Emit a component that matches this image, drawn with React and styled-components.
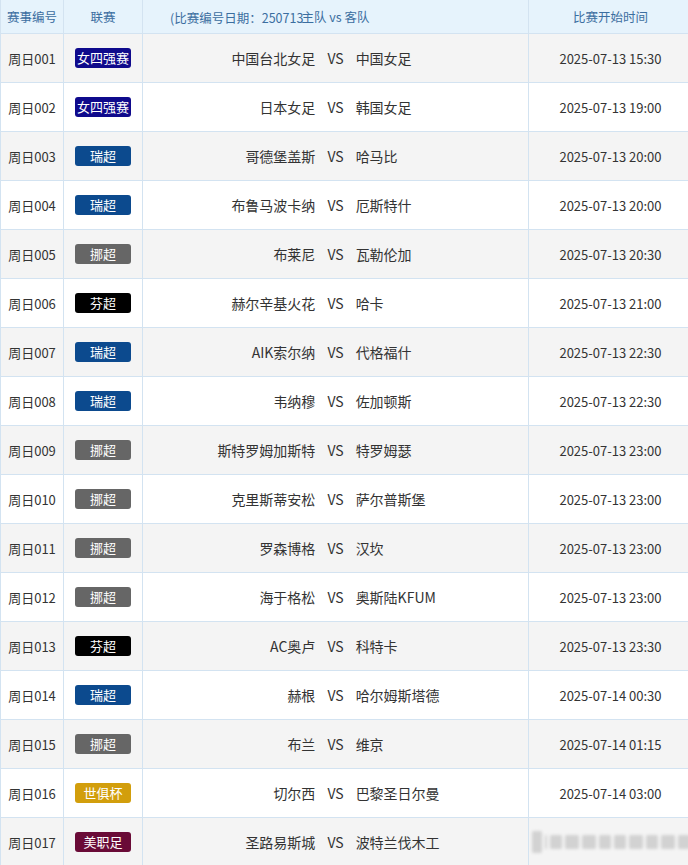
import React from "react";
import styled, { createGlobalStyle } from "styled-components";

const GlobalStyle = createGlobalStyle`
  body {
    margin: 0;
    background: #fff;
    font-family: "Noto Sans CJK SC", "Noto Sans", sans-serif;
    color: #333;
  }
`;

const Table = styled.table`
  width: 688px;
  border-collapse: collapse;
  table-layout: fixed;
  font-size: 13px;
`;

const HeadCell = styled.th`
  position: relative;
  height: 33px;
  padding: 0;
  background: #e6f3fc;
  color: #3b6ea0;
  font-weight: 400;
  font-size: 12.5px;
  border: 1px solid #d3e3f1;
  border-top: none;
  text-align: center;
  width: ${(p) => p.w}px;
`;

const Note = styled.span`
  position: absolute;
  left: 27px;
  top: 50%;
  transform: translateY(-50%);
  white-space: nowrap;
`;

const Row = styled.tr`
  background: ${(p) => (p.odd ? "#f4f4f4" : "#fff")};
`;

const Cell = styled.td`
  height: 48px;
  padding: 0;
  border: 1px solid #d3e3f1;
  text-align: center;
  vertical-align: middle;
  overflow: hidden;
`;

const Badge = styled.span`
  display: inline-block;
  width: 56px;
  height: 20px;
  line-height: 20px;
  border-radius: 3px;
  color: #fff;
  font-size: 13px;
  background: ${(p) => p.bg};
`;

const Match = styled.div`
  display: grid;
  grid-template-columns: 1fr auto 1fr;
  column-gap: 12px;
  align-items: center;
  font-size: 14px;
`;

const Home = styled.span`
  text-align: right;
`;

const Away = styled.span`
  text-align: left;
`;

const Vs = styled.span`
  font-size: 14px;
`;

const Mark = styled.div`
  display: flex;
  align-items: center;
  justify-content: center;
  gap: 3px;
  filter: blur(1.5px);
`;

const MarkBlock = styled.span`
  width: ${(p) => p.w}px;
  height: ${(p) => p.h}px;
  background: #d2d2d2;
  border-radius: 2px;
`;

const leagues = {
  女四强赛: "#0f0a8c",
  瑞超: "#0c4a8e",
  挪超: "#666666",
  芬超: "#000000",
  世俱杯: "#d29e0c",
  美职足: "#6a0b37",
};

const matches = [
  ["001", "女四强赛", "中国台北女足", "中国女足", "2025-07-13 15:30"],
  ["002", "女四强赛", "日本女足", "韩国女足", "2025-07-13 19:00"],
  ["003", "瑞超", "哥德堡盖斯", "哈马比", "2025-07-13 20:00"],
  ["004", "瑞超", "布鲁马波卡纳", "厄斯特什", "2025-07-13 20:00"],
  ["005", "挪超", "布莱尼", "瓦勒伦加", "2025-07-13 20:30"],
  ["006", "芬超", "赫尔辛基火花", "哈卡", "2025-07-13 21:00"],
  ["007", "瑞超", "AIK索尔纳", "代格福什", "2025-07-13 22:30"],
  ["008", "瑞超", "韦纳穆", "佐加顿斯", "2025-07-13 22:30"],
  ["009", "挪超", "斯特罗姆加斯特", "特罗姆瑟", "2025-07-13 23:00"],
  ["010", "挪超", "克里斯蒂安松", "萨尔普斯堡", "2025-07-13 23:00"],
  ["011", "挪超", "罗森博格", "汉坎", "2025-07-13 23:00"],
  ["012", "挪超", "海于格松", "奥斯陆KFUM", "2025-07-13 23:00"],
  ["013", "芬超", "AC奥卢", "科特卡", "2025-07-13 23:30"],
  ["014", "瑞超", "赫根", "哈尔姆斯塔德", "2025-07-14 00:30"],
  ["015", "挪超", "布兰", "维京", "2025-07-14 01:15"],
  ["016", "世俱杯", "切尔西", "巴黎圣日尔曼", "2025-07-14 03:00"],
  ["017", "美职足", "圣路易斯城", "波特兰伐木工", null],
];

const markBlocks = [
  [10, 22], [2, 14], [12, 14], [14, 14], [14, 14], [12, 14],
  [12, 14], [14, 14], [12, 14], [14, 14], [12, 14],
];

export default function App() {
  return (
    <>
      <GlobalStyle />
      <Table>
        <thead>
          <tr>
            <HeadCell w={62}>赛事编号</HeadCell>
            <HeadCell w={78}>联赛</HeadCell>
            <HeadCell w={385}>
              <Note>(比赛编号日期：250713</Note>
              主队 vs 客队
            </HeadCell>
            <HeadCell w={163}>比赛开始时间</HeadCell>
          </tr>
        </thead>
        <tbody>
          {matches.map(([no, league, home, away, time], i) => (
            <Row key={no} odd={i % 2 === 0}>
              <Cell>周日{no}</Cell>
              <Cell>
                <Badge bg={leagues[league]}>{league}</Badge>
              </Cell>
              <Cell>
                <Match>
                  <Home>{home}</Home>
                  <Vs>VS</Vs>
                  <Away>{away}</Away>
                </Match>
              </Cell>
              <Cell>
                {time || (
                  <Mark>
                    {markBlocks.map(([w, h], k) => (
                      <MarkBlock key={k} w={w} h={h} />
                    ))}
                  </Mark>
                )}
              </Cell>
            </Row>
          ))}
        </tbody>
      </Table>
    </>
  );
}
